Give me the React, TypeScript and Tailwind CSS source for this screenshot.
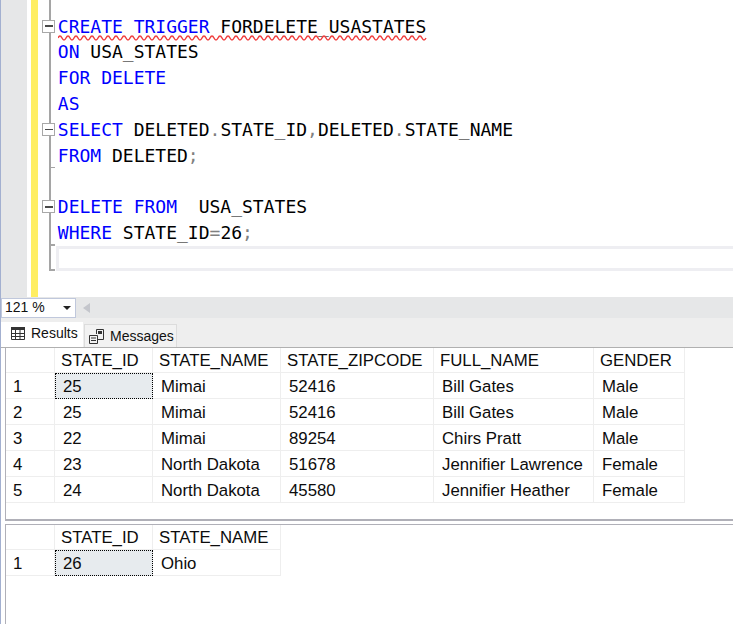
import React from "react";

type Tok = [string, string?];
const K = "text-[#0000ff]";
const G = "text-[#808080]";
const lines: { fold?: boolean; tick?: boolean; toks: Tok[]; squiggle?: boolean }[] = [
  { fold: true, squiggle: true, toks: [["CREATE TRIGGER", K], [" FORDELETE_USASTATES"]] },
  { toks: [["ON", K], [" USA_STATES"]] },
  { toks: [["FOR DELETE", K]] },
  { toks: [["AS", K]] },
  { fold: true, toks: [["SELECT", K], [" DELETED"], [".", G], ["STATE_ID"], [",", G], ["DELETED"], [".", G], ["STATE_NAME"]] },
  { tick: true, toks: [["FROM", K], [" DELETED"], [";", G]] },
  { toks: [] },
  { fold: true, toks: [["DELETE FROM", K], ["  USA_STATES"]] },
  { tick: true, toks: [["WHERE", K], [" STATE_ID"], ["=", G], ["26"], [";", G]] },
];

function Fold() {
  return (
    <span className="absolute left-0 top-[6px] flex h-[13px] w-[13px] items-center justify-center border border-[#a8a8a8] bg-white">
      <span className="h-[1.5px] w-[8px] bg-[#4a4a4a]" />
    </span>
  );
}

function Squiggle() {
  let d = "M0 3 q2 -4 4 0";
  for (let x = 4; x < 366; x += 4) d += " t4 0";
  return (
    <svg className="absolute left-0 top-[17px]" width="369" height="6">
      <path d={d} fill="none" stroke="#f04040" strokeWidth="1.5" />
    </svg>
  );
}

function Cell({ children, pad = "pl-[6px]" }: { children?: React.ReactNode; pad?: string }) {
  return (
    <div className={`flex items-center whitespace-nowrap border-r border-b border-[#eeeeee] pt-[2px] ${pad}`}>{children}</div>
  );
}

function Grid({ cols, head, rows, width }: { cols: string; head: string[]; rows: string[][]; width: string }) {
  return (
    <div className={`grid ${cols} ${width} grid-rows-[25px] auto-rows-[26px] text-[16.8px] text-[#0c0c0c]`}>
      <Cell />
      {head.map((h) => (
        <Cell key={h}>{h}</Cell>
      ))}
      {rows.map((r, i) => (
        <React.Fragment key={i}>
          <Cell pad="pl-[7px]">{i + 1}</Cell>
          {r.map((c, j) => (
            <div
              key={j}
              className={
                i === 0 && j === 0
                  ? "flex items-center border border-dotted border-black bg-[#e7ebee] pl-[7px] pt-[2px]"
                  : "flex items-center whitespace-nowrap border-r border-b border-[#eeeeee] pl-[8px] pt-[2px]"
              }
            >
              {c}
            </div>
          ))}
        </React.Fragment>
      ))}
    </div>
  );
}

export default function App() {
  return (
    <div className="flex h-[624px] w-[733px] flex-col overflow-hidden border-l border-[#a3b0d0] bg-white font-['Liberation_Sans',sans-serif]">
      {/* editor */}
      <div className="flex h-[297px] shrink-0">
        <div className="w-[26px] shrink-0 bg-[#e6e7e8]" />
        <div className="ml-[4px] w-[7px] shrink-0 bg-[#ffee62]" />
        <div className="ml-[4px] min-w-0 flex-1 font-['DejaVu_Sans_Mono',monospace] text-[18px] text-black">
          <div className="relative h-[13.7px] w-[16px]">
            <span className="absolute left-[7px] top-0 h-full w-[1.5px] bg-[#a5a5a5]" />
          </div>
          {lines.map((l, i) => (
            <div key={i} className="flex h-[25.8px] items-center">
              <div className="relative h-full w-[15.8px] shrink-0 self-stretch">
                <span className="absolute left-[7px] top-0 h-full w-[1.5px] bg-[#a5a5a5]" />
                {l.fold && <Fold />}
                {l.tick && <span className="absolute bottom-0 left-[7px] h-[1.5px] w-[6px] bg-[#a5a5a5]" />}
              </div>
              <div className="relative whitespace-pre leading-none">
                {l.toks.map((t, j) => (
                  <span key={j} className={t[1]}>
                    {t[0]}
                  </span>
                ))}
                {l.squiggle && <Squiggle />}
              </div>
            </div>
          ))}
          <div className="flex h-[25px]">
            <div className="relative w-[16px] shrink-0">
              <span className="absolute left-[7px] top-0 h-full w-[1.5px] bg-[#a5a5a5]" />
              <span className="absolute bottom-0 left-[7px] h-[1.5px] w-[6px] bg-[#a5a5a5]" />
            </div>
            <div className="ml-[-2px] flex-1 border-y-[3px] border-l-[3px] border-[#eeeef2]" />
          </div>
        </div>
      </div>
      {/* zoom bar */}
      <div className="flex h-[21px] shrink-0 items-center bg-[#e6e7e8]">
        <div className="flex h-[20px] w-[75px] items-center justify-between border border-[#c0c8dc] bg-white pl-[3px] pr-[3px] text-[14px] text-[#111]">
          <span>121 %</span>
          <span className="mr-[1px] mt-[1px] h-0 w-0 border-x-[4px] border-t-[4px] border-x-transparent border-t-[#222]" />
        </div>
        <span className="ml-[7px] h-0 w-0 border-y-[5px] border-r-[7px] border-y-transparent border-r-[#c4c6cc]" />
      </div>
      {/* tabs */}
      <div className="flex h-[30px] shrink-0 items-end border-b border-[#b0b0b0] bg-[#eeeeee] text-[14px] text-[#111]">
        <div className="flex h-[25px] w-[82px] items-center gap-[6px] bg-white pb-[2px] pl-[10px]">
          <svg width="14" height="13" viewBox="0 0 14 13" fill="none" stroke="#333" strokeWidth="1">
            <rect x="0" y="0" width="14" height="3" fill="#333" stroke="none" />
            <path d="M.5.5h13v12H.5zM.5 6.5h13M.5 9.5h13M4.5.5v12M9 .5v12" />
          </svg>
          <span>Results</span>
        </div>
        <div className="ml-[1px] flex h-[23px] w-[93px] items-center gap-[6px] border-x border-t border-[#dcdcdc] bg-[#f2f2f2] pl-[4px]">
          <svg width="15" height="15" viewBox="0 0 15 15" fill="none" stroke="#333" strokeWidth="1">
            <path d="M7.5 5V.5h7v10H9" />
            <path d="M.5 6.5h8v8h-8zM2 9h5M2 11.5h5" />
            <rect x="9" y="2" width="4" height="3" fill="#333" stroke="none" />
          </svg>
          <span>Messages</span>
        </div>
      </div>
      {/* results */}
      <div className="flex min-h-0 flex-1 flex-col pl-[4px]">
        <div className="h-[173px] shrink-0 border-l border-b-2 border-[#b0b0b8]">
          <Grid
            width="w-[679px]"
            cols="grid-cols-[49px_98px_128px_153px_160px_91px]"
            head={["STATE_ID", "STATE_NAME", "STATE_ZIPCODE", "FULL_NAME", "GENDER"]}
            rows={[
              ["25", "Mimai", "52416", "Bill Gates", "Male"],
              ["25", "Mimai", "52416", "Bill Gates", "Male"],
              ["22", "Mimai", "89254", "Chirs Pratt", "Male"],
              ["23", "North Dakota", "51678", "Jennifier Lawrence", "Female"],
              ["24", "North Dakota", "45580", "Jennifier Heather", "Female"],
            ]}
          />
        </div>
        <div className="mt-[3px] flex-1 border-l border-t border-[#b0b0b8]">
          <Grid
            width="w-[275px]"
            cols="grid-cols-[49px_98px_128px]"
            head={["STATE_ID", "STATE_NAME"]}
            rows={[["26", "Ohio"]]}
          />
        </div>
      </div>
    </div>
  );
}
